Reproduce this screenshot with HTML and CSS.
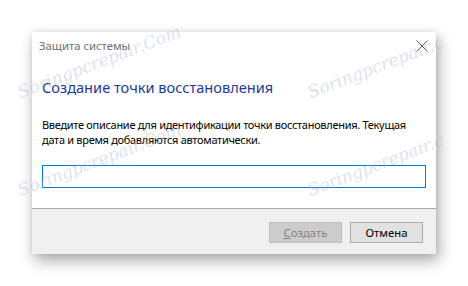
FILE: index.html
```html
<!DOCTYPE html>
<html lang="ru">
<head>
<meta charset="utf-8">
<title>Защита системы</title>
<link rel="stylesheet" href="styles.css">
</head>
<body>
<div class="stage">
  <div class="dialog">
    <div class="titlebar">
      <span class="title">Защита системы</span>
      <svg class="close" width="12" height="12" viewBox="0 0 12 12"><path d="M0.5 0.5 L11.5 11.5 M11.5 0.5 L0.5 11.5" stroke="#5a5a5a" stroke-width="1" fill="none"/></svg>
    </div>
    <div class="content">
      <h1 class="heading">Создание точки восстановления</h1>
      <p class="desc">Введите описание для идентификации точки восстановления. Текущая дата и время добавляются автоматически.</p>
      <div class="field"></div>
    </div>
    <div class="footer">
      <button class="btn btn-disabled" disabled><u>С</u>оздать</button>
      <button class="btn">Отмена</button>
    </div>
  </div>
  <span class="wm wm1">Soringpcrepair.Com</span>
  <span class="wm wm2">Soringpcrepair.c</span>
  <span class="wm wm3">Soringpcrepair.Com</span>
  <span class="wm wm4">Soringpcrepair.c</span>
</div>
</body>
</html>
```
FILE: styles.css
```css
html, body {
  margin: 0;
  padding: 0;
  background: #ffffff;
}
.stage {
  position: relative;
  width: 468px;
  height: 286px;
  overflow: hidden;
  padding: 32px 0 0 32px;
  box-sizing: border-box;
  font-family: "Noto Sans", "DejaVu Sans", sans-serif;
}
.dialog {
  width: 404px;
  height: 222px;
  background: #ffffff;
  display: flex;
  flex-direction: column;
  box-shadow: 3px 7px 14px rgba(0,0,0,0.32), 0 0 6px rgba(0,0,0,0.10);
}
.titlebar {
  height: 30px;
  display: flex;
  justify-content: space-between;
  align-items: flex-start;
  padding: 6px 8px 0 7px;
  box-sizing: border-box;
}
.title {
  font-size: 11.3px;
  line-height: 16px;
  color: #6d6d6d;
}
.close {
  margin-top: 2px;
}
.content {
  flex: 1;
  padding: 0 10px 0 10px;
}
.heading {
  margin: 15px 0 0 0;
  font-size: 14.6px;
  line-height: 20px;
  font-weight: normal;
  color: #1e3a96;
}
.desc {
  margin: 20px 0 0 0;
  font-size: 11px;
  letter-spacing: -0.3px;
  line-height: 15px;
  color: #000000;
}
.field {
  margin-top: 18px;
  height: 23px;
  border: 1px solid #0078d7;
  box-sizing: border-box;
}
.footer {
  height: 46px;
  border-top: 1px solid #a9a9a9;
  background: #f0f0f0;
  box-sizing: border-box;
  display: flex;
  justify-content: flex-end;
  align-items: flex-start;
  gap: 8px;
  padding: 13px 13px 0 0;
}
.btn {
  width: 73px;
  height: 21px;
  margin: 0;
  padding: 0;
  border: 1px solid #adadad;
  background: #e1e1e1;
  font-family: "Noto Sans", "DejaVu Sans", sans-serif;
  font-size: 11.3px;
  color: #000000;
  box-sizing: border-box;
}
.btn-disabled {
  background: #cccccc;
  border-color: #bfbfbf;
  color: #838383;
}
.btn u {
  text-decoration: underline;
}
.wm {
  position: absolute;
  font-family: "DejaVu Serif", serif;
  font-style: italic;
  font-size: 17px;
  color: rgba(165, 178, 222, 0.4);
  transform: rotate(-21deg);
  transform-origin: left bottom;
  white-space: nowrap;
}
.wm1 { left: 22px; top: 82px; }
.wm2 { left: 312px; top: 82px; }
.wm3 { left: 22px; top: 180px; }
.wm4 { left: 312px; top: 180px; }
```
